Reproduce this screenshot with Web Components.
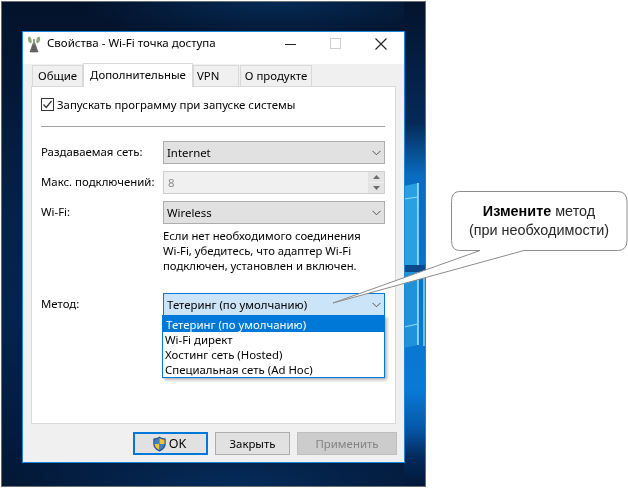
<!DOCTYPE html>
<html>
<head>
<meta charset="utf-8">
<style>
html, body { margin: 0; padding: 0; background: #fff; }
body { width: 628px; height: 488px; overflow: hidden; position: relative; font-family: "Noto Sans", "Open Sans", sans-serif; }
</style>
</head>
<body>
<desktop-shot>
  <props-window title="Свойства - Wi-Fi точка доступа"></props-window>
</desktop-shot>
<call-out></call-out>

<script>
class DesktopShot extends HTMLElement {
    constructor() {
        super();
        this.attachShadow({ mode: 'open' });
        this.shadowRoot.innerHTML = `
            <style>
            :host {
                display: block;
                box-sizing: border-box;
                width: 425px;
                height: 486px;
                margin: 1px 0 0 1px;
                border: 1px solid #6d6d6d;
                padding: 29px 0 0 20px;
                position: relative;
                overflow: hidden;
                filter: blur(.35px);
                background:
                    radial-gradient(ellipse 260px 60px at 55% 100%, #052c5c 0%, rgba(5,44,92,0) 100%),
                    radial-gradient(ellipse 200px 40px at 65% 0%, #052a55 0%, rgba(5,42,85,0) 100%),
                    linear-gradient(180deg, #03122a 0%, #04224a 45%, #03244f 65%, #021a3c 92%, #03142e 100%);
            }
            .glow {
                position: absolute;
                right: 0;
                top: 0;
                bottom: 0;
                width: 21px;
                background: linear-gradient(180deg, #03132c 0%, #042a58 25%, #0a6cc0 36%, #0a74cc 60%, #0a7ad6 80%, #0558a8 88%, #032a5c 94%, #02183a 100%);
            }
            svg { position: absolute; left: 402px; top: 0; }
            ::slotted(*) { position: relative; }
            </style>
            <div class="glow"></div>
            <svg width="21" height="484" viewBox="0 0 21 484">
                <path d="M0 184 L14 181 V263 H0 Z" fill="#2aa0e0"/>
                <path d="M0 270 H14 V343 L0 346 Z" fill="#1f92da"/>
                <rect x="0" y="263" width="21" height="7" fill="#0b4a8a"/>
                <path d="M14 181 V263 M14 270 V343" stroke="#b4ecfa" stroke-width="1.4"/>
                <path d="M0 197 L14 195 M0 325 L14 322" stroke="#8fdcf4" stroke-width="1.2"/>
                <rect x="19" y="270" width="2" height="74" fill="#6cc0e2"/>
            </svg>
            <slot></slot>
        `;
    }
}

class TabStrip extends HTMLElement {
    constructor() {
        super();
        this.attachShadow({ mode: 'open' });
        this.shadowRoot.innerHTML = `
            <style>
            :host {
                display: flex;
                align-items: flex-end;
                height: 24px;
                margin: -1px 0 -1px 0;
                padding-left: 1px;
                position: relative;
                z-index: 1;
                font-size: 11.4px;
            }
            .tab {
                box-sizing: border-box;
                height: 21px;
                margin-bottom: 1px;
                line-height: 20px;
                background: #f0f0f0;
                border: 1px solid #d9d9d9;
                border-bottom: 0;
                text-align: center;
                color: #000;
                white-space: nowrap;
            }
            .on {
                height: 24px;
                margin-bottom: 0;
                line-height: 21px;
                background: #fff;
            }
            </style>
            <div class="tab" style="width:51px">Общие</div>
            <div class="tab on" style="width:110px">Дополнительные</div>
            <div class="tab" style="width:46px;text-align:left;padding-left:3px">VPN</div>
            <div class="tab" style="width:72px;margin-left:1px">О продукте</div>
        `;
    }
}

class ComboBox extends HTMLElement {
    constructor() {
        super();
        this.attachShadow({ mode: 'open' });
        this.shadowRoot.innerHTML = `
            <style>
            :host {
                display: flex;
                box-sizing: border-box;
                align-items: center;
                justify-content: space-between;
                width: 222px;
                height: 23px;
                padding: 0 3px 0 3px;
                background: #e1e1e1;
                border: 1px solid #adadad;
                color: #000;
                font-size: 11.4px;
            }
            :host([focused]) {
                background: #cce4f7;
                border-color: #0078d7;
            }
            svg { width: 9px; height: 6px; }
            </style>
            <slot></slot>
            <svg viewBox="0 0 9 6"><path d="M.5 .8 L4.5 4.8 L8.5 .8" fill="none" stroke="#555" stroke-width="1"/></svg>
        `;
    }
}

class SpinBox extends HTMLElement {
    constructor() {
        super();
        this.attachShadow({ mode: 'open' });
        this.shadowRoot.innerHTML = `
            <style>
            :host {
                display: flex;
                box-sizing: border-box;
                align-items: center;
                justify-content: space-between;
                width: 222px;
                height: 23px;
                padding: 0 0 0 4px;
                background: #f0f0f0;
                border: 1px solid #cfcfcf;
                color: #8d8d8d;
                font-size: 11.4px;
            }
            .btns {
                display: flex;
                flex-direction: column;
                justify-content: space-between;
                box-sizing: border-box;
                height: 21px;
                width: 16px;
                border-left: 1px solid #e2e2e2;
            }
            .btns div {
                height: 10px;
                background: #e4e4e4;
                display: flex;
                align-items: center;
                justify-content: center;
            }
            svg { width: 7px; height: 4px; }
            </style>
            <slot></slot>
            <div class="btns">
                <div><svg viewBox="0 0 7 4"><path d="M3.5 0 L7 4 H0 Z" fill="#6d6d6d"/></svg></div>
                <div><svg viewBox="0 0 7 4"><path d="M0 0 H7 L3.5 4 Z" fill="#6d6d6d"/></svg></div>
            </div>
        `;
    }
}

class FormRow extends HTMLElement {
    constructor() {
        super();
        this.attachShadow({ mode: 'open' });
        this.shadowRoot.innerHTML = `
            <style>
            :host {
                display: grid;
                grid-template-columns: 122px 222px;
                align-items: start;
                font-size: 11.4px;
                color: #000;
            }
            .lab { padding-top: 3px; white-space: nowrap; }
            </style>
            <div class="lab"><slot name="label"></slot></div>
            <div><slot></slot></div>
        `;
    }
}

class DialogButton extends HTMLElement {
    constructor() {
        super();
        this.attachShadow({ mode: 'open' });
        this.shadowRoot.innerHTML = `
            <style>
            :host {
                display: flex;
                box-sizing: border-box;
                align-items: center;
                justify-content: center;
                width: 75px;
                height: 23px;
                background: #e1e1e1;
                border: 1px solid #adadad;
                color: #000;
                font-size: 11.4px;
            }
            :host([primary]) { border: 2px solid #0078d7; }
            :host([disabled]) { width: 100px; background: #cccccc; border-color: #bfbfbf; color: #838383; }
            </style>
            <slot></slot>
        `;
    }
}

class PropsWindow extends HTMLElement {
    constructor() {
        super();
        this.attachShadow({ mode: 'open' });
        this.shadowRoot.innerHTML = `
            <style>
            :host {
                display: block;
                box-sizing: border-box;
                width: 383px;
                height: 432px;
                border: 1px solid #1a86d8;
                background: #f0f0f0;
                font-family: "Noto Sans", "Open Sans", sans-serif;
            }
            .title {
                display: flex;
                align-items: flex-start;
                box-sizing: border-box;
                height: 32px;
                padding: 3px 1px 0 4px;
                background: #fff;
                font-size: 11.5px;
                line-height: 16px;
                color: #000;
            }
            .title .cap { margin-left: 6px; flex: 1; white-space: nowrap; }
            .winbtn { width: 45px; display: flex; justify-content: center; padding-top: 3px; }
            .tabs-area { padding: 0 8px; }
            .panel {
                box-sizing: border-box;
                height: 338px;
                background: #fff;
                border: 1px solid #d9d9d9;
                padding: 10px 10px 0 9px;
                position: relative;
            }
            .check {
                display: flex;
                align-items: center;
                gap: 3px;
                font-size: 11.4px;
                color: #000;
                height: 15px;
            }
            .rule { height: 1px; background: #a0a0a0; margin: 14px 0; }
            .rows { display: flex; flex-direction: column; gap: 7px; }
            .hint { font-size: 11.3px; line-height: 15px; color: #000; margin: 4px 0 0 0; white-space: nowrap; }
            .method { margin-top: 20px; }
            .list {
                position: absolute;
                left: 130px;
                top: 228px;
                box-sizing: border-box;
                width: 223px;
                height: 63px;
                background: #fff;
                border: 1px solid #0078d7;
                box-shadow: 2px 2px 3px rgba(0,0,0,.3);
                font-size: 11.4px;
                color: #000;
                line-height: 15px;
            }
            .list div { padding-left: 2px; white-space: nowrap; }
            .list .sel { background: #0078d7; color: #fff; padding: 1px 0 0 3px; }
            .foot {
                display: flex;
                justify-content: flex-end;
                gap: 7px;
                padding: 8px 7px 0 0;
            }
            .ok { display: inline-flex; align-items: center; gap: 2px; margin-left: -3px; font-size: 12.5px; }
            </style>
            <div class="title">
                <svg width="14" height="18" viewBox="0 0 14 18">
                    <path d="M6.2 8 L3 17 H11 L7.8 8 Z M6 12 H8 M5 14.5 H9" fill="#6a6a6a" stroke="#4a4a4a" stroke-width=".6"/>
                    <ellipse cx="2.8" cy="5" rx="1.8" ry="3.4" fill="#8cab78" transform="rotate(-12 2.8 5)"/>
                    <ellipse cx="11.2" cy="5" rx="1.8" ry="3.4" fill="#8cab78" transform="rotate(12 11.2 5)"/>
                    <rect x="6.2" y="4" width="1.6" height="6" fill="#7b8a70"/>
                </svg>
                <span class="cap">${this.getAttribute('title')}</span>
                <div class="winbtn"><svg width="11" height="11" viewBox="0 0 11 11"><path d="M0 6.5 H11" stroke="#222"/></svg></div>
                <div class="winbtn"><svg width="11" height="11" viewBox="0 0 11 11"><rect x=".5" y=".5" width="10" height="10" fill="none" stroke="#cfcfcf"/></svg></div>
                <div class="winbtn"><svg width="12" height="12" viewBox="0 0 12 12"><path d="M.5 .5 L11.5 11.5 M11.5 .5 L.5 11.5" stroke="#222" stroke-width="1.1"/></svg></div>
            </div>
            <div class="tabs-area">
                <tab-strip></tab-strip>
                <div class="panel">
                    <div class="check">
                        <svg width="13" height="13" viewBox="0 0 13 13"><rect x=".5" y=".5" width="12" height="12" fill="#fff" stroke="#333"/><path d="M2.5 6.5 L5.2 9.5 L10.5 3" fill="none" stroke="#333" stroke-width="1.2"/></svg>
                        <span>Запускать программу при запуске системы</span>
                    </div>
                    <div class="rule"></div>
                    <div class="rows">
                        <form-row><span slot="label">Раздаваемая сеть:</span><combo-box>Internet</combo-box></form-row>
                        <form-row><span slot="label">Макс. подключений:</span><spin-box>8</spin-box></form-row>
                        <form-row><span slot="label">Wi-Fi:</span><combo-box>Wireless</combo-box></form-row>
                    </div>
                    <form-row>
                        <span slot="label"></span>
                        <p class="hint">Если нет необходимого соединения<br>Wi-Fi, убедитесь, что адаптер Wi-Fi<br>подключен, установлен и включен.</p>
                    </form-row>
                    <form-row class="method"><span slot="label">Метод:</span><combo-box focused>Тетеринг (по умолчанию)</combo-box></form-row>
                    <div class="list">
                        <div class="sel">Тетеринг (по умолчанию)</div>
                        <div>Wi-Fi директ</div>
                        <div>Хостинг сеть (Hosted)</div>
                        <div>Специальная сеть (Ad Hoc)</div>
                    </div>
                </div>
            </div>
            <div class="foot">
                <dialog-button primary>
                    <span class="ok">
                        <svg width="15" height="16" viewBox="0 0 14 16">
                            <path d="M7 .5 C5 2 3 2.4 .8 2.5 V8 C.8 11.6 3.6 14.2 7 15.5 C10.4 14.2 13.2 11.6 13.2 8 V2.5 C11 2.4 9 2 7 .5 Z" fill="#24528f"/>
                            <path d="M7 2 V8 H2 V3.6 C4 3.5 5.5 3 7 2 Z" fill="#3f7fd0"/>
                            <path d="M7 2 C8.5 3 10 3.5 12 3.6 V8 H7 Z" fill="#f5c32c"/>
                            <path d="M2 8 H7 V14 C4.4 13 2.2 11 2 8 Z" fill="#f5c32c"/>
                            <path d="M7 8 H12 C11.8 11 9.6 13 7 14 Z" fill="#3f7fd0"/>
                        </svg>OK
                    </span>
                </dialog-button>
                <dialog-button>Закрыть</dialog-button>
                <dialog-button disabled>Применить</dialog-button>
            </div>
        `;
    }
}

class CallOut extends HTMLElement {
    constructor() {
        super();
        this.attachShadow({ mode: 'open' });
        this.shadowRoot.innerHTML = `
            <style>
            :host {
                position: absolute;
                left: 0;
                top: 0;
                width: 628px;
                height: 488px;
                display: block;
                pointer-events: none;
                filter: blur(.3px);
            }
            svg { position: absolute; left: 0; top: 0; }
            .txt {
                position: absolute;
                left: 451px;
                top: 192px;
                width: 176px;
                height: 58px;
                display: flex;
                flex-direction: column;
                align-items: center;
                justify-content: center;
                font-family: "Liberation Sans", Arial, sans-serif;
                font-size: 14.4px;
                line-height: 19px;
                color: #262626;
            }
            b { color: #000; }
            </style>
            <svg width="628" height="488" viewBox="0 0 628 488">
                <path d="M459.5 191.5 H617.5 Q627 191.5 627 201.5 V240.5 Q627 250.5 617.5 250.5 H524 L333 303 L480 250.5 H459.5 Q451.5 250.5 451.5 240.5 V201.5 Q451.5 191.5 459.5 191.5 Z" fill="#fff" stroke="#8c8c8c"/>
            </svg>
            <div class="txt">
                <div><b>Измените</b> метод</div>
                <div>(при необходимости)</div>
            </div>
        `;
    }
}

customElements.define('tab-strip', TabStrip);
customElements.define('combo-box', ComboBox);
customElements.define('spin-box', SpinBox);
customElements.define('form-row', FormRow);
customElements.define('dialog-button', DialogButton);
customElements.define('props-window', PropsWindow);
customElements.define('desktop-shot', DesktopShot);
customElements.define('call-out', CallOut);
</script>
</body>
</html>
